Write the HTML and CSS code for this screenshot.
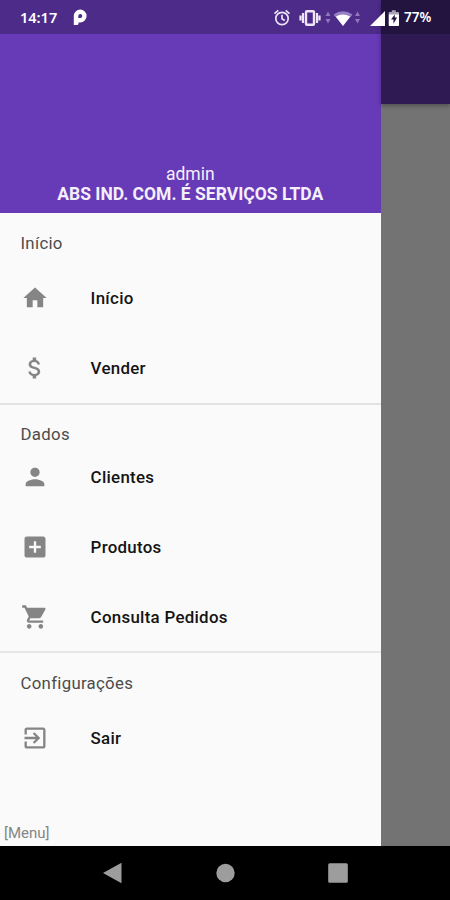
FILE: index.html
```html
<!DOCTYPE html>
<html lang="pt">
<head>
<meta charset="utf-8">
<title>Menu</title>
<link rel="stylesheet" href="styles.css">
</head>
<body>
<div class="phone">
  <div class="screen">
    <aside class="drawer">
      <header class="account">
        <span class="user">admin</span>
        <strong class="company">ABS IND. COM. É SERVIÇOS LTDA</strong>
      </header>
      <nav class="menu">
        <section class="group group-home">
          <h2>Início</h2>
          <a class="item"><svg class="icon" viewBox="0 0 24 24"><path d="M10 20v-6h4v6h5v-8h3L12 3 2 12h3v8z"/></svg><span>Início</span></a>
          <a class="item"><svg class="icon" viewBox="0 0 24 24"><path d="M11.8 10.9c-2.27-.59-3-1.2-3-2.15 0-1.09 1.01-1.85 2.7-1.85 1.78 0 2.44.85 2.5 2.1h2.21c-.07-1.72-1.12-3.3-3.21-3.81V3h-3v2.16c-1.94.42-3.5 1.68-3.5 3.61 0 2.31 1.91 3.46 4.7 4.13 2.5.6 3 1.48 3 2.41 0 .69-.49 1.79-2.7 1.79-2.06 0-2.87-.92-2.98-2.1h-2.2c.12 2.19 1.76 3.42 3.68 3.83V21h3v-2.15c1.95-.37 3.5-1.5 3.5-3.55 0-2.84-2.43-3.81-4.7-4.4z"/></svg><span>Vender</span></a>
        </section>
        <section class="group group-data">
          <h2>Dados</h2>
          <a class="item"><svg class="icon" viewBox="0 0 24 24"><path d="M12 12c2.21 0 4-1.79 4-4s-1.79-4-4-4-4 1.79-4 4 1.79 4 4 4zm0 2c-2.67 0-8 1.34-8 4v2h16v-2c0-2.66-5.33-4-8-4z"/></svg><span>Clientes</span></a>
          <a class="item"><svg class="icon" viewBox="0 0 24 24"><path d="M19 3H5c-1.11 0-2 .9-2 2v14c0 1.1.89 2 2 2h14c1.1 0 2-.9 2-2V5c0-1.1-.9-2-2-2zm-2 10h-4v4h-2v-4H7v-2h4V7h2v4h4v2z"/></svg><span>Produtos</span></a>
          <a class="item"><svg class="icon" viewBox="0 0 24 24"><path d="M7 18c-1.1 0-1.99.9-1.99 2S5.900 22 7 22s2-.9 2-2-.9-2-2-2zM1 2v2h2l3.6 7.590-1.350 2.450c-.16.28-.25.61-.25.96 0 1.100.9 2 2 2h12v-2H7.420c-.14 0-.25-.11-.25-.25l.03-.12.9-1.630h7.450c.75 0 1.410-.41 1.750-1.030l3.580-6.490c.08-.14.12-.31.12-.48 0-.55-.45-1-1-1H5.210l-.94-2H1zm16 16c-1.100 0-1.990.9-1.990 2s.89 2 1.990 2 2-.9 2-2-.9-2-2-2z"/></svg><span>Consulta Pedidos</span></a>
        </section>
        <section class="group group-settings">
          <h2>Configurações</h2>
          <a class="item"><svg class="icon" viewBox="0 0 24 24"><path d="M10.090 15.590L11.500 17l5-5-5-5-1.410 1.410L12.670 11H3v2h9.670l-2.580 2.590zM19 3H5c-1.110 0-2 .9-2 2v4h2V5h14v14H5v-4H3v4c0 1.100.89 2 2 2h14c1.100 0 2-.9 2-2V5c0-1.100-.9-2-2-2z"/></svg><span>Sair</span></a>
        </section>
      </nav>
      <footer class="caption">[Menu]</footer>
    </aside>
    <div class="backdrop"><div class="appbar"></div></div>
    <div class="statusbar">
      <span class="clock">14:17</span>
      <svg class="brand" viewBox="0 0 14 16"><path fill="#fff" fill-rule="evenodd" d="M.8 16V7a6.400 6.400 0 1 1 6.400 6.400H5.500v1.100Q5.500 16 4 16zM5.300 9h2a2 2 0 1 0-2-2z"/></svg>
      <svg class="indicators" viewBox="0 0 130 22">
        <g fill="none" stroke="#eee6f8" stroke-width="1.700"><circle cx="12" cy="12.500" r="6.200"/><path d="M12 8.800v4l2.800 1.700M4.500 7.600l3.800-3.200M19.500 7.600l-3.800-3.200"/><rect x="36" y="5.200" width="8" height="13.600" rx="1" stroke-width="2.400"/><path d="M33 7v10M47 7v10M30.500 9.500v5M49.500 9.500v5" stroke-width="2.200"/></g>
        <path fill="#8f79bd" d="M55.500 10l2.500-4.500L60.500 10zM55.500 13h5L58 17.500zM85 10l2.500-4.500L90 10zM85 13h5l-2.500 4.500z"/>
        <path fill="#9680c4" d="M63.500 8.500q9.500-6.500 19 0l-2 2.500h-15z"/>
        <path fill="#fff" d="M65.700 10.700q7.300-4.300 14.600 0L73 20zM100 20h15V5z"/>
        <path fill="#aaa2b5" d="M121.800 4.300h4V6h2.400q.8 0 .8.800V9h-10.300V6.800q0-.8.8-.8h2.300z"/>
        <path fill="#fff" fill-rule="evenodd" d="M118.700 8.500H129v10.700q0 .8-.8.800h-8.700q-.8 0-.8-.8zM124.800 8.500l-3.800 5h2.500v4.300l3.600-6.300h-2.300z"/>
      </svg>
      <span class="battery">77%</span>
    </div>
  </div>
  <div class="navbar">
    <svg viewBox="0 0 24 24"><path d="M2 12L20.500 1.700v20.600z"/></svg>
    <svg viewBox="0 0 24 24"><circle cx="11.500" cy="12" r="9.200"/></svg>
    <svg viewBox="0 0 24 24"><rect x="2.200" y="2.200" width="19.600" height="19.600" rx="1.500"/></svg>
  </div>
</div>
</body>
</html>
```
FILE: styles.css
```css
* { box-sizing: border-box; }
body { margin: 0; font-family: Roboto, "Liberation Sans", sans-serif; }
.phone { width: 450px; height: 900px; display: flex; flex-direction: column; overflow: hidden; background: #000; }
.screen { position: relative; height: 846px; display: flex; }
.drawer { width: 380.500px; display: flex; flex-direction: column; background: #fafafa; }
.account { height: 213px; padding-bottom: 9px; display: flex; flex-direction: column; justify-content: flex-end; align-items: center; background: #673ab7; color: #f4effb; font-size: 17.500px; line-height: 20px; }
.user { font-weight: 400; }
.company { font-weight: 700; font-size: 17.500px; }
.menu { flex: 1; }
.group h2 { margin: 0; padding-left: 20.500px; height: 20px; font-size: 16.800px; line-height: 20px; font-weight: 400; letter-spacing: .3px; color: #4c4c4c; }
.group-home { height: 192px; padding-top: 20px; border-bottom: 2px solid #e2e2e2; }
.group-home h2 { margin-bottom: 10px; }
.group-data { height: 248px; padding-top: 19px; border-bottom: 2px solid #e6e6e6; }
.group-data h2 { margin-bottom: -2px; }
.group-settings { padding-top: 20px; }
.group-settings h2 { margin-bottom: 10px; }
.item { height: 70px; padding-left: 21.300px; display: flex; align-items: center; font-size: 16.900px; font-weight: 500; letter-spacing: .28px; color: #141414; }
.icon { width: 28px; height: 28px; margin-right: 41.300px; fill: #858585; }
.caption { height: 26px; padding-left: 4px; font-size: 15px; line-height: 27px; color: #858585; }
.backdrop { flex: 1; background: #737373; }
.appbar { height: 104px; background: #2f1a54; box-shadow: 0 2px 4px rgba(0, 0, 0, .3); }
.statusbar { position: absolute; inset: 0 0 auto 0; height: 34px; display: flex; align-items: center; padding-left: 20px; background: rgba(0, 0, 0, .25); color: #fff; }
.clock { width: 53px; font-size: 14.500px; font-weight: 600; font-family: "Noto Sans", Roboto, sans-serif; }
.brand { width: 14px; height: 16px; }
.indicators { width: 130px; height: 22px; margin: 0 4px 0 183px; }
.battery { font-size: 13.500px; font-weight: 600; font-family: "Noto Sans", Roboto, sans-serif; }
.navbar { flex: 1; padding: 0 100px 0 101px; display: flex; justify-content: space-between; align-items: center; background: #000; }
.navbar svg { width: 24px; height: 24px; fill: #9d9d9d; }
```
